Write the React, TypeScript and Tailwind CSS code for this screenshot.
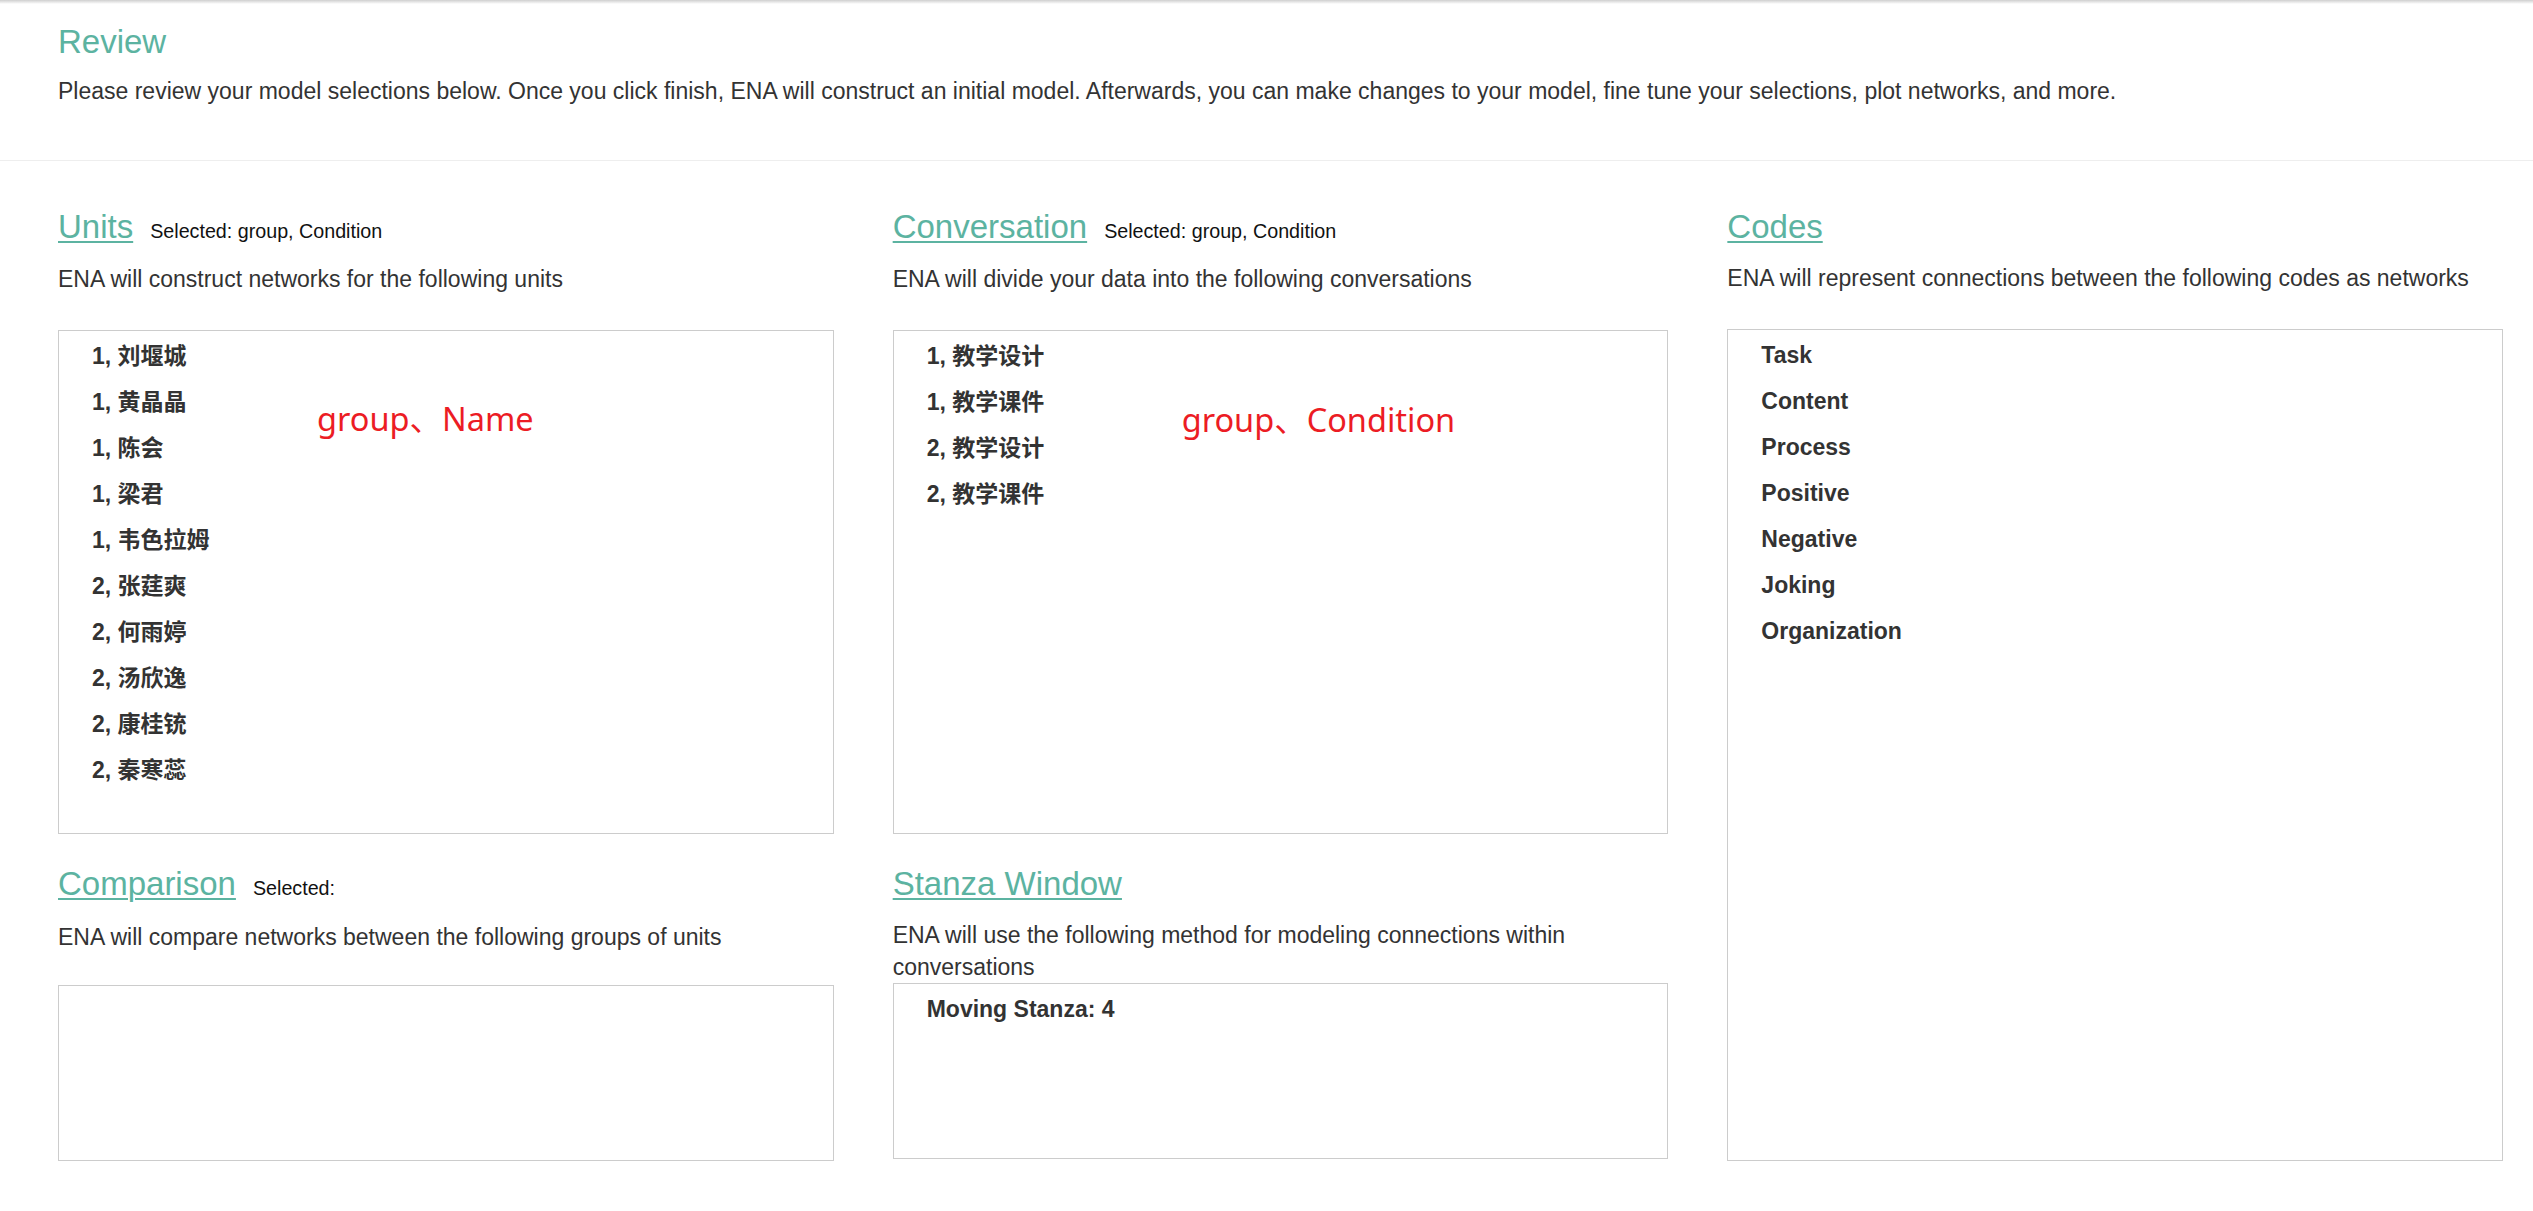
import React from 'react';

const units = [
    '1, 刘堰城',
    '1, 黄晶晶',
    '1, 陈会',
    '1, 梁君',
    '1, 韦色拉姆',
    '2, 张莛爽',
    '2, 何雨婷',
    '2, 汤欣逸',
    '2, 康桂铳',
    '2, 秦寒蕊',
];

const conversations = ['1, 教学设计', '1, 教学课件', '2, 教学设计', '2, 教学课件'];

const codes = ['Task', 'Content', 'Process', 'Positive', 'Negative', 'Joking', 'Organization'];

type SectionProps = {
    title: string;
    selected?: string;
    desc: string;
    descClass?: string;
    items: string[];
    boxClass: string;
    note?: React.ReactNode;
    className?: string;
};

const Section = ({ title, selected, desc, descClass = 'h-[66px]', items, boxClass, note, className = '' }: SectionProps) => (
    <section className={`flex flex-col ${className}`}>
        <div className="flex items-baseline gap-[17px]">
            <a href="#" className="text-[33px] leading-[36px] text-[#5cb3a1] underline decoration-[2px] underline-offset-[3px]">
                {title}
            </a>
            {selected !== undefined && (
                <span className="text-[19.7px] text-[#111]">Selected: {selected}</span>
            )}
        </div>
        <p className={`mt-[18px] text-[23px] leading-[31.5px] text-[#333] ${descClass}`}>{desc}</p>
        <div className={`relative border border-[#cccccc] bg-white ${boxClass}`}>
            <ul className="pt-[2px] pl-[33px]">
                {items.map((item) => (
                    <li key={item} className="h-[46px] text-[23px] leading-[46px] font-bold text-[#333]">
                        {item}
                    </li>
                ))}
            </ul>
            {note}
        </div>
    </section>
);

// red hand-added labels sitting over the lists
const Note = ({ text, pos }: { text: string; pos: string }) => (
    <span className={`absolute ${pos} font-['Noto_Sans','Noto_Sans_CJK_SC',sans-serif] text-[32.5px] leading-none text-[#ec1c24] whitespace-nowrap`}>
        {text}
    </span>
);

const App = () => {
    return (
        <div className="min-h-screen bg-white font-['Liberation_Sans','Noto_Sans_CJK_SC',sans-serif] text-[#333]">
            <div className="h-[4px] bg-linear-to-b from-[#cfcfcf] to-white" />

            {/* Header */}
            <header className="border-b border-[#eeeeee] pl-[58px] pr-[30px] pt-[20px] pb-[52px]">
                <h1 className="text-[33px] leading-[36px] font-normal text-[#5cb3a1]">Review</h1>
                <p className="mt-[16px] text-[23px] leading-[31.5px] text-[#333]">
                    Please review your model selections below. Once you click finish, ENA will construct an initial model. Afterwards, you can make changes to your model, fine tune your selections, plot networks, and more.
                </p>
            </header>

            {/* Selections */}
            <main className="flex gap-[59px] pl-[58px] pr-[30px] pt-[48px]">
                <div className="flex min-w-0 flex-1 flex-col">
                    <Section
                        title="Units"
                        selected="group, Condition"
                        desc="ENA will construct networks for the following units"
                        items={units}
                        boxClass="h-[504px]"
                        note={<Note text="group、Name" pos="left-[258px] top-[72px]" />}
                    />
                    <Section
                        className="mt-[32px]"
                        title="Comparison"
                        selected=""
                        desc="ENA will compare networks between the following groups of units"
                        descClass="h-[63px]"
                        items={[]}
                        boxClass="h-[176px]"
                    />
                </div>

                <div className="flex min-w-0 flex-1 flex-col">
                    <Section
                        title="Conversation"
                        selected="group, Condition"
                        desc="ENA will divide your data into the following conversations"
                        items={conversations}
                        boxClass="h-[504px]"
                        note={<Note text="group、Condition" pos="left-[288px] top-[73px]" />}
                    />
                    <Section
                        className="mt-[32px]"
                        title="Stanza Window"
                        desc="ENA will use the following method for modeling connections within conversations"
                        descClass="h-[63px]"
                        items={['Moving Stanza: 4']}
                        boxClass="h-[176px]"
                    />
                </div>

                <div className="flex min-w-0 flex-1 flex-col">
                    <Section
                        className="flex-1"
                        title="Codes"
                        desc="ENA will represent connections between the following codes as networks"
                        items={codes}
                        boxClass="flex-1"
                    />
                </div>
            </main>
        </div>
    );
};

export default App;
